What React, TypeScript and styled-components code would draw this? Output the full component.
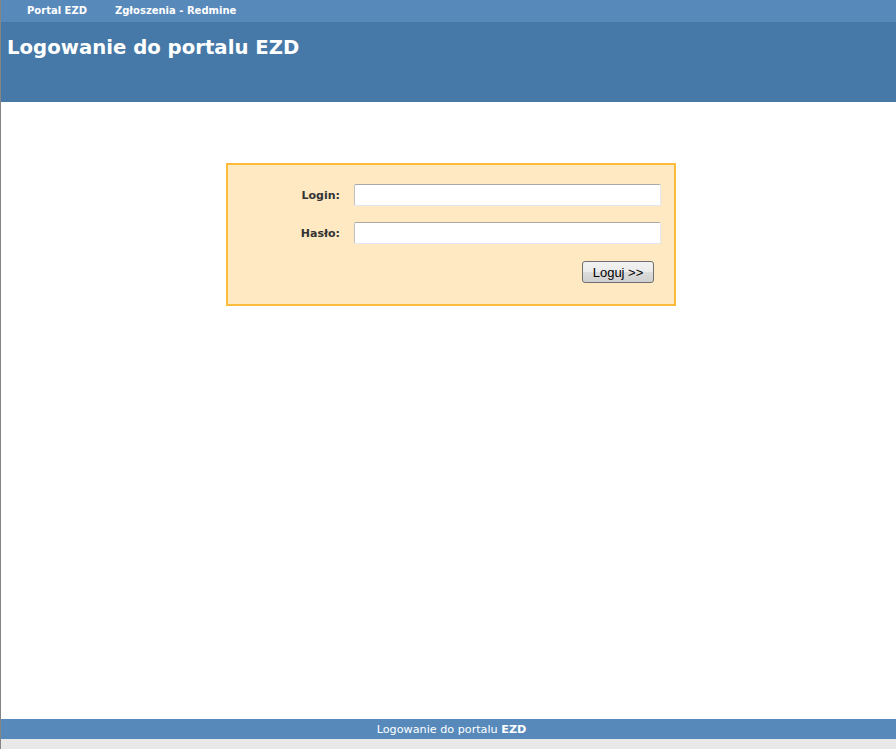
import styled, { createGlobalStyle } from 'styled-components'

const GlobalStyle = createGlobalStyle`
  html, body {
    margin: 0;
    padding: 0;
    background: #ffffff;
  }
  body {
    font-family: "DejaVu Sans", Verdana, sans-serif;
  }
`

export const Page = styled.div`
  display: flex;
  flex-direction: column;
  height: 749px;
  border-left: 1px solid #858585;
  box-sizing: border-box;
  background: #ffffff;
`

export const TopNav = styled.nav`
  background: #5789bb;
  height: 22px;
  display: flex;
  align-items: center;
  padding-left: 26px;
  gap: 28px;
`

export const NavLink = styled.a`
  color: #ffffff;
  font-size: 10px;
  font-weight: bold;
  text-decoration: none;
  line-height: 22px;
`

export const Header = styled.header`
  background: #4679a7;
  height: 80px;
  padding: 13px 0 0 6px;
  box-sizing: border-box;
`

export const Title = styled.h1`
  margin: 0;
  color: #ffffff;
  font-size: 19.7px;
  font-weight: bold;
  line-height: 26px;
`

export const Main = styled.main`
  flex: 1;
  display: flex;
  justify-content: center;
  padding: 61px 0 0 5px;
  align-items: flex-start;
`

export const LoginBox = styled.form`
  width: 450px;
  height: 143px;
  box-sizing: border-box;
  background: #fee9c2;
  border: 2px solid #fdbb3b;
  padding: 19px 13px 0 0;
  display: flex;
  flex-direction: column;
  gap: 16px;
`

export const Row = styled.div`
  display: flex;
  align-items: center;
  height: 22px;
`

export const Label = styled.label`
  width: 112px;
  text-align: right;
  font-size: 11px;
  font-weight: bold;
  color: #333333;
  margin-right: 14px;
`

export const Input = styled.input`
  width: 307px;
  height: 22px;
  box-sizing: border-box;
  background: #ffffff;
  border: 1px solid #e2e6ee;
  border-top-color: #a9a9a9;
  border-left-color: #c0c0c0;
  border-radius: 2px;
  padding: 2px 4px;
  outline: none;
`

export const ButtonRow = styled.div`
  display: flex;
  justify-content: flex-end;
  padding-right: 7px;
  margin-top: 1px;
`

export const Button = styled.button`
  width: 72px;
  height: 22px;
  box-sizing: border-box;
  border: 1px solid #707070;
  border-radius: 3px;
  background: linear-gradient(#f2f2f2 0%, #ebebeb 50%, #dddddd 51%, #cfcfcf 100%);
  font-family: "Liberation Sans", Arial, sans-serif;
  font-size: 13px;
  color: #000000;
  padding: 0;
  cursor: pointer;
`

export const Footer = styled.footer`
  background: #578abb;
  height: 20px;
  display: flex;
  align-items: center;
  justify-content: center;
  color: #ffffff;
  font-size: 11.2px;
  padding-left: 6px;
  b {
    font-weight: bold;
  }
`

export const BottomStrip = styled.div`
  height: 10px;
  background: #e9e9e9;
`

const App = () => {
  return (
    <>
      <GlobalStyle />
      <Page>
        <TopNav>
          <NavLink href="#">Portal EZD</NavLink>
          <NavLink href="#">Zgłoszenia - Redmine</NavLink>
        </TopNav>
        <Header>
          <Title>Logowanie do portalu EZD</Title>
        </Header>
        <Main>
          <LoginBox onSubmit={e => e.preventDefault()}>
            <Row>
              <Label htmlFor="login">Login:</Label>
              <Input id="login" type="text" />
            </Row>
            <Row>
              <Label htmlFor="haslo">Hasło:</Label>
              <Input id="haslo" type="password" />
            </Row>
            <ButtonRow>
              <Button type="submit">Loguj &gt;&gt;</Button>
            </ButtonRow>
          </LoginBox>
        </Main>
        <Footer>
          <span>
            Logowanie do portalu <b>EZD</b>
          </span>
        </Footer>
        <BottomStrip />
      </Page>
    </>
  )
}

export default App
